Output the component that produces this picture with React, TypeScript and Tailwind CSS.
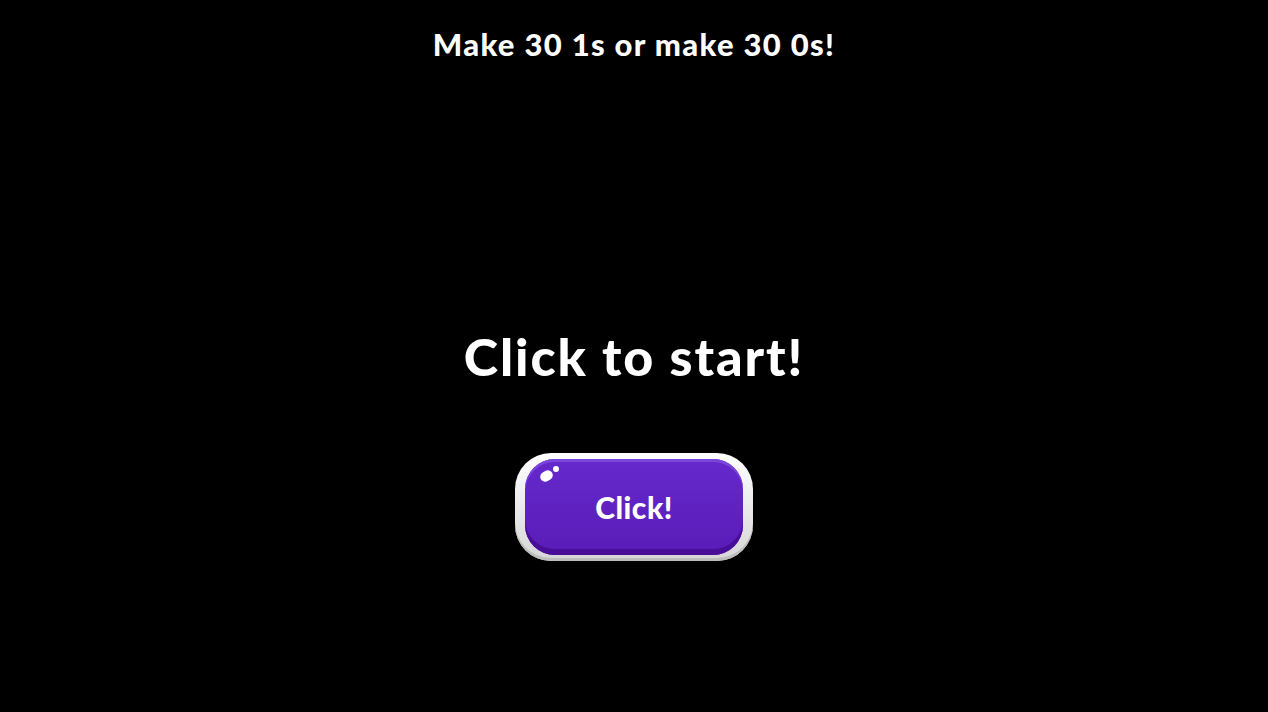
export default function App() {
  return (
    <div
      className="h-[712px] w-full bg-black text-white flex flex-col items-center"
      style={{ fontFamily: 'Lato, "Noto Sans", sans-serif' }}
    >
      <h1 className="mt-[25px] text-[31px] leading-[38px] font-black tracking-[1.3px]">
        Make 30 1s or make 30 0s!
      </h1>

      <h2 className="mt-[263px] text-[52px] leading-[60px] font-black tracking-[1.9px]">
        Click to start!
      </h2>

      <button
        type="button"
        className="mt-[67px] w-[238px] h-[108px] rounded-[36px] bg-gradient-to-b from-[#ffffff] to-[#d6d6d6] px-[10px] py-[6px] shadow-[inset_0_-3px_0_#bdbdbd]"
      >
        <span className="relative flex h-full w-full items-center justify-center rounded-[30px] bg-gradient-to-b from-[#6529cc] to-[#5a1cb8] shadow-[inset_0_-6px_0_#4a0d98,inset_0_3px_0_#7b45dc]">
          <span className="absolute left-[15px] top-[12px] h-[10px] w-[13px] -rotate-[30deg] rounded-full bg-white" />
          <span className="absolute left-[28px] top-[7px] h-[6px] w-[6px] rounded-full bg-white" />
          <span className="text-[30px] font-black tracking-[0.5px] text-white">Click!</span>
        </span>
      </button>
    </div>
  );
}
